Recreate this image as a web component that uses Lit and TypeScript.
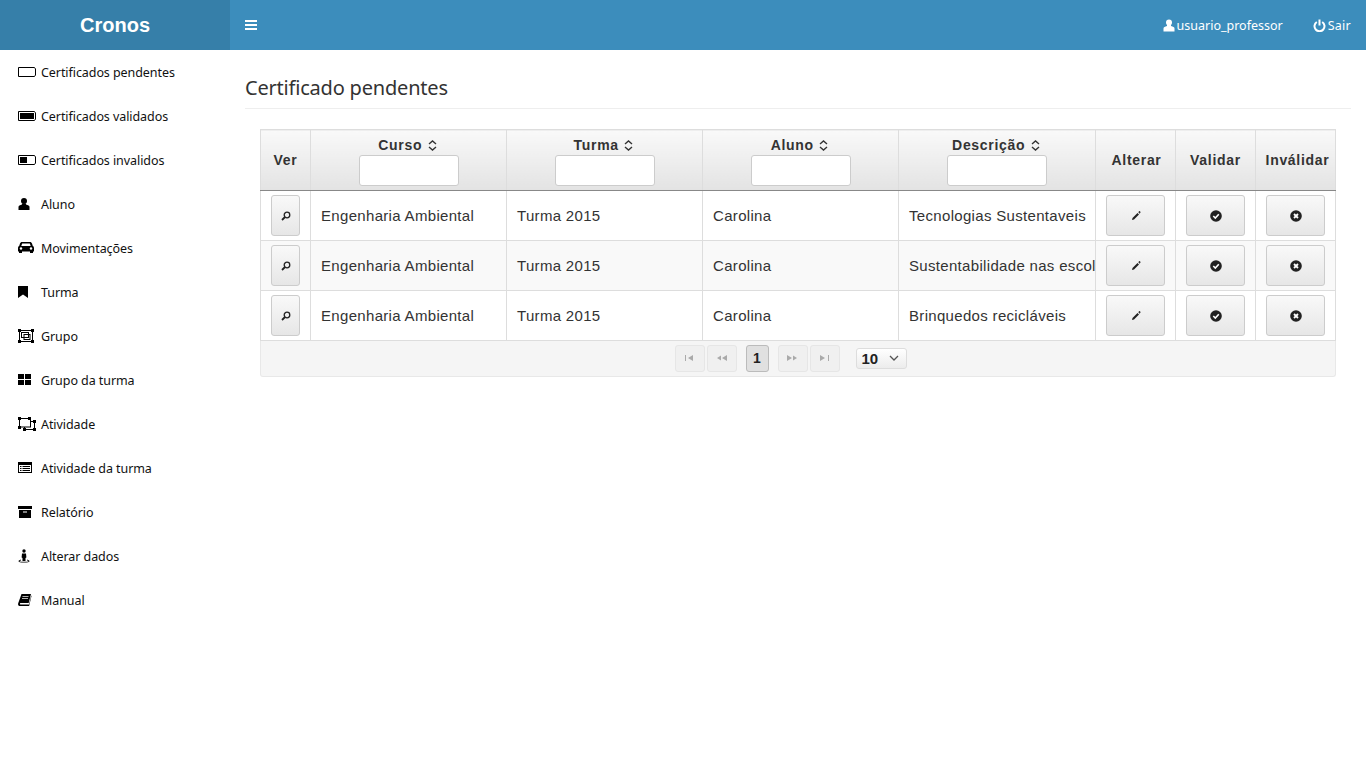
import { LitElement, html, css, svg } from 'lit';
import { customElement } from 'lit/decorators.js';

const ico = (body: unknown) => html`<svg width="18" height="14" viewBox="0 0 18 14">${body}</svg>`;

const battery = svg`<path d="M.5 2.500h16l1 1.500v6l-1 1.500H.5z" fill="none" stroke="#000"/>`;

const menu = [
  { label: 'Certificados pendentes', icon: ico(battery) },
  { label: 'Certificados validados', icon: ico(svg`${battery}<rect x="2" y="4" width="14" height="6"/>`) },
  { label: 'Certificados invalidos', icon: ico(svg`${battery}<rect x="2" y="4" width="7" height="6"/>`) },
  { label: 'Aluno', icon: ico(svg`<circle cx="6" cy="4" r="3"/><path d="M4 6.500h4v1c2 .4 3.500 1.200 3.500 2.500V13H.5V10C.5 8.700 2 7.900 4 7.500z"/>`) },
  { label: 'Movimentações', icon: ico(svg`<path d="M4 1h8c1 0 1.700.6 2 1.500l.8 2.500c.8.4 1.200 1.200 1.200 2v3.500h-1V12h-3v-1.500H4V12H1v-1.500H0V7c0-.8.4-1.600 1.200-2L2 2.500C2.300 1.600 3 1 4 1z"/><path d="M4.200 2.500h7.600l.9 2.500H3.300z" fill="#fff"/><circle cx="3" cy="7.500" r="1.200" fill="#fff"/><circle cx="13" cy="7.500" r="1.200" fill="#fff"/>`) },
  { label: 'Turma', icon: ico(svg`<path d="M0 1h10v12L5 9.500 0 13z"/>`) },
  { label: 'Grupo', icon: ico(svg`<g fill="none" stroke="#000"><rect x="1.500" y="1.500" width="13" height="11"/><rect x="3.500" y="3.500" width="7" height="5"/><rect x="6" y="5.500" width="6" height="5"/></g><rect width="3" height="3"/><rect x="13" width="3" height="3"/><rect y="11" width="3" height="3"/><rect x="13" y="11" width="3" height="3"/>`) },
  { label: 'Grupo da turma', icon: ico(svg`<rect y="1" width="6" height="5"/><rect x="7" y="1" width="6" height="5"/><rect y="7" width="6" height="5"/><rect x="7" y="7" width="6" height="5"/>`) },
  { label: 'Atividade', icon: ico(svg`<g fill="none" stroke="#000"><rect x="1.500" y="1.500" width="11" height="8.500"/><path d="M12.500 4.500h4v8h-10V10"/></g><rect width="3" height="3"/><rect x="10" width="3" height="3"/><rect y="9" width="3" height="3"/><rect x="15" y="3" width="3" height="3"/><rect x="15" y="11" width="3" height="3"/><rect x="5" y="11" width="3" height="3"/>`) },
  { label: 'Atividade da turma', icon: ico(svg`<path fill-rule="evenodd" d="M0 1h14v11H0zM1 4v7h12V4z"/><rect x="2" y="5" width="1.500" height="1"/><rect x="4.500" y="5" width="7.500" height="1"/><rect x="2" y="7" width="1.500" height="1"/><rect x="4.500" y="7" width="7.500" height="1"/><rect x="2" y="9" width="1.500" height="1"/><rect x="4.500" y="9" width="7.500" height="1"/>`) },
  { label: 'Relatório', icon: ico(svg`<rect y="1" width="14" height="3"/><path fill-rule="evenodd" d="M1 5h12v8H1zM5 6.500v1h4v-1z"/>`) },
  { label: 'Alterar dados', icon: ico(svg`<circle cx="6" cy="2" r="1.700"/><path d="M4 4.500h4l.4 4-.9.5v3h-3V9l-.9-.5z"/><path d="M3 10.500C1.500 11 .5 11.500.5 12.300c0 .8 2 1.200 5.500 1.200s5.500-.4 5.500-1.200c0-.8-1-1.300-2.500-1.800v1c1 .2 1.500.4 1.500.7 0 .3-2 .6-4.500.6s-4.500-.3-4.500-.6c0-.3.5-.5 1.500-.7z"/>`) },
  { label: 'Manual', icon: ico(svg`<path d="M3.500 1H13l-2.300 9H2.500c-.8 0-.8 1.500 0 1.500h8.500l2.200-9 .3.500-2.400 10H2C.3 13-.2 11.800.2 10.300z"/><path d="M4.500 3.500h6M4 5.500h6" stroke="#fff" stroke-width=".7"/>`) },
];

const rows = [
  ['Engenharia Ambiental', 'Turma 2015', 'Carolina', 'Tecnologias Sustentaveis'],
  ['Engenharia Ambiental', 'Turma 2015', 'Carolina', 'Sustentabilidade nas escolas'],
  ['Engenharia Ambiental', 'Turma 2015', 'Carolina', 'Brinquedos recicláveis'],
];

const sortIcon = html`<svg class="sort" width="9" height="11" viewBox="0 0 9 11"><path d="M1 4l3.500-3L8 4M1 7l3.500 3L8 7" fill="none" stroke="#333" stroke-width="1.400"/></svg>`;
const searchIcon = html`<svg width="10" height="10" viewBox="0 0 10 10"><circle cx="6" cy="4" r="2.800" fill="none" stroke="#222" stroke-width="1.300"/><path d="M4 6L1 9" stroke="#222" stroke-width="1.800"/></svg>`;
const pencilIcon = html`<svg width="10" height="10" viewBox="0 0 10 10"><path d="M6.500 2l1.500 1.500L3 8.500 1 9l.5-2z" fill="#222"/><path d="M8.500 0v2.500M7.300 1.200h2.400" stroke="#222" stroke-width=".8"/></svg>`;
const okIcon = html`<svg width="12" height="12" viewBox="0 0 12 12"><circle cx="6" cy="6" r="5.800" fill="#222"/><path d="M3.300 6l2 2 3.500-3.800" fill="none" stroke="#fff" stroke-width="1.600"/></svg>`;
const noIcon = html`<svg width="12" height="12" viewBox="0 0 12 12"><circle cx="6" cy="6" r="5.800" fill="#222"/><path d="M4 4l4 4M8 4l-4 4" fill="none" stroke="#fff" stroke-width="1.800"/></svg>`;

@customElement('app-root')
export class AppRoot extends LitElement {
  static styles = css`
    :host {
      display: block;
      height: 768px;
      background: #fff;
      font-family: 'Noto Sans', sans-serif;
      overflow: hidden;
    }
    .top {
      display: flex;
      height: 50px;
      background: #3c8dbc;
      color: #fff;
    }
    .brand {
      width: 230px;
      background: #367fa9;
      text-align: center;
      font: bold 20px/50px 'Liberation Sans', sans-serif;
    }
    .burger {
      display: flex;
      align-items: center;
      padding-left: 15px;
      flex: 1;
    }
    .user {
      display: flex;
      align-items: center;
      gap: 2px;
      font-size: 12.500px;
      margin-right: 30px;
    }
    .user:last-child {
      margin-right: 15px;
      letter-spacing: 0.25px;
    }
    .body {
      display: flex;
    }
    .side {
      width: 230px;
      flex: none;
    }
    .item {
      display: flex;
      align-items: center;
      height: 44px;
      padding-left: 18px;
      font-size: 12.500px;
      letter-spacing: -0.07px;
      color: #111;
    }
    .item svg {
      flex: none;
      margin-right: 5px;
    }
    .main {
      flex: 1;
      padding: 0 15px;
    }
    h1 {
      margin: 0;
      height: 59px;
      box-sizing: border-box;
      padding-top: 24px;
      border-bottom: 1px solid #eee;
      font-size: 20px;
      line-height: 28px;
      font-weight: 400;
      color: #333;
      letter-spacing: -0.2px;
    }
    .wrap {
      margin: 20px 15px 0;
      border-radius: 3px;
      font-family: 'Liberation Sans', sans-serif;
      color: #333;
    }
    table {
      width: 100%;
      border-collapse: collapse;
      table-layout: fixed;
    }
    th {
      height: 60px;
      padding: 0;
      border: 1px solid #ddd;
      border-bottom: 1px solid #888;
      background: linear-gradient(#f9f9f9, #e3e3e3);
      font-size: 14px;
      letter-spacing: 0.7px;
      vertical-align: middle;
    }
    th.sortable {
      height: 58px;
      padding-top: 2px;
    }
    th.shift {
      padding-left: 2px;
    }
    th.shift-more {
      padding-left: 4px;
    }
    .head-label {
      display: inline-block;
      margin-right: 2px;
    }
    th input {
      display: block;
      width: 100px;
      height: 31px;
      box-sizing: border-box;
      margin: 2px auto 0;
      border: 1px solid #ccc;
      border-radius: 3px;
      background: #fff;
    }
    .sort {
      margin-left: 1px;
      vertical-align: -1px;
    }
    td {
      height: 49px;
      padding: 0 0 0 10px;
      border: 1px solid #ddd;
      font-size: 15px;
      letter-spacing: 0.32px;
      white-space: nowrap;
      overflow: hidden;
    }
    tr:nth-child(even) td {
      background: #f9f9f9;
    }
    td.act {
      padding: 0;
      text-align: center;
    }
    .btn {
      display: inline-flex;
      align-items: center;
      justify-content: center;
      width: 59px;
      height: 41px;
      box-sizing: border-box;
      border: 1px solid #ccc;
      border-radius: 3px;
      background: linear-gradient(#f9f9f9, #e6e6e6);
      vertical-align: middle;
    }
    .btn.small {
      width: 29px;
    }
    .pager {
      display: flex;
      align-items: center;
      justify-content: center;
      height: 36px;
      box-sizing: border-box;
      border: 1px solid #e8e8e8;
      border-top: 0;
      border-radius: 0 0 3px 3px;
      background: #f5f5f5;
      padding: 0 15px 1px 0;
    }
    .pg {
      display: flex;
      align-items: center;
      justify-content: center;
      width: 30px;
      height: 27px;
      box-sizing: border-box;
      margin-right: 2px;
      border: 1px solid #e6e6e6;
      border-radius: 3px;
      background: #f0f0f0;
    }
    .cur {
      width: 23px;
      margin: 0 9px 0 7px;
      border-color: #bbb;
      background: #e0e0e0;
      font: bold 14px 'Liberation Sans', sans-serif;
      color: #222;
    }
    .sel {
      display: flex;
      align-items: center;
      justify-content: space-between;
      width: 51px;
      height: 21px;
      box-sizing: border-box;
      margin-left: 14px;
      padding: 0 7px 0 5px;
      border: 1px solid #ddd;
      border-radius: 3px;
      background: linear-gradient(#fff, #ececec);
      font: bold 15px 'Liberation Sans', sans-serif;
      color: #222;
    }
  `;

  render() {
    const headers = ['Curso', 'Turma', 'Aluno', 'Descrição'];
    return html`
      <div class="top">
        <div class="brand">Cronos</div>
        <div class="burger">
          <svg width="12" height="10" viewBox="0 0 12 10"><path d="M0 0h12v2H0zM0 4h12v2H0zM0 8h12v2H0z" fill="#fff"/></svg>
        </div>
        <div class="user">
          <svg width="12" height="13" viewBox="0 0 12 13"><circle cx="6" cy="3.500" r="3" fill="#fff"/><path d="M4 6h4v1c2 .4 3.500 1.200 3.500 2.500V12.500H.5V9.500C.5 8.200 2 7.400 4 7z" fill="#fff"/></svg>
          usuario_professor
        </div>
        <div class="user">
          <svg width="13" height="13" viewBox="0 0 13 13"><path d="M3.800 3a5 5 0 1 0 5.400 0" fill="none" stroke="#fff" stroke-width="2"/><path d="M6.500 .5v6" stroke="#fff" stroke-width="2"/></svg>
          Sair
        </div>
      </div>
      <div class="body">
        <nav class="side">
          ${menu.map((m) => html`<div class="item">${m.icon}<span>${m.label}</span></div>`)}
        </nav>
        <main class="main">
          <h1>Certificado pendentes</h1>
          <div class="wrap">
            <table>
              <colgroup>
                <col style="width:50px" />
                <col style="width:196px" /><col style="width:196px" /><col style="width:196px" /><col style="width:197px" />
                <col style="width:80px" /><col style="width:80px" /><col />
              </colgroup>
              <thead>
                <tr>
                  <th>Ver</th>
                  ${headers.map((h) => html`<th class="sortable"><span class="head-label">${h} ${sortIcon}</span><input /></th>`)}
                  <th class="shift">Alterar</th>
                  <th>Validar</th>
                  <th class="shift-more">Inválidar</th>
                </tr>
              </thead>
              <tbody>
                ${rows.map(
                  (r) => html`<tr>
                    <td class="act"><span class="btn small">${searchIcon}</span></td>
                    ${r.map((c) => html`<td>${c}</td>`)}
                    <td class="act"><span class="btn">${pencilIcon}</span></td>
                    <td class="act"><span class="btn">${okIcon}</span></td>
                    <td class="act"><span class="btn">${noIcon}</span></td>
                  </tr>`,
                )}
              </tbody>
            </table>
            <div class="pager">
              <span class="pg"><svg width="9" height="6" viewBox="0 0 9 6"><path d="M0 0h1v6H0zM8 0v6L3 3z" fill="#aaa"/></svg></span>
              <span class="pg"><svg width="11" height="6" viewBox="0 0 11 6"><path d="M5 .5L1 3l4 2.500M11 0v6L6 3z" fill="#aaa"/></svg></span>
              <span class="pg cur">1</span>
              <span class="pg"><svg width="11" height="6" viewBox="0 0 11 6"><path d="M0 0v6l5-3zM6 .5L10 3 6 5.500" fill="#aaa"/></svg></span>
              <span class="pg"><svg width="9" height="6" viewBox="0 0 9 6"><path d="M0 0v6l5-3zM8 0h1v6H8z" fill="#aaa"/></svg></span>
              <span class="sel">10<svg width="10" height="6" viewBox="0 0 10 6"><path d="M1 1l4 4 4-4" fill="none" stroke="#555" stroke-width="1.300"/></svg></span>
            </div>
          </div>
        </main>
      </div>
    `;
  }
}
